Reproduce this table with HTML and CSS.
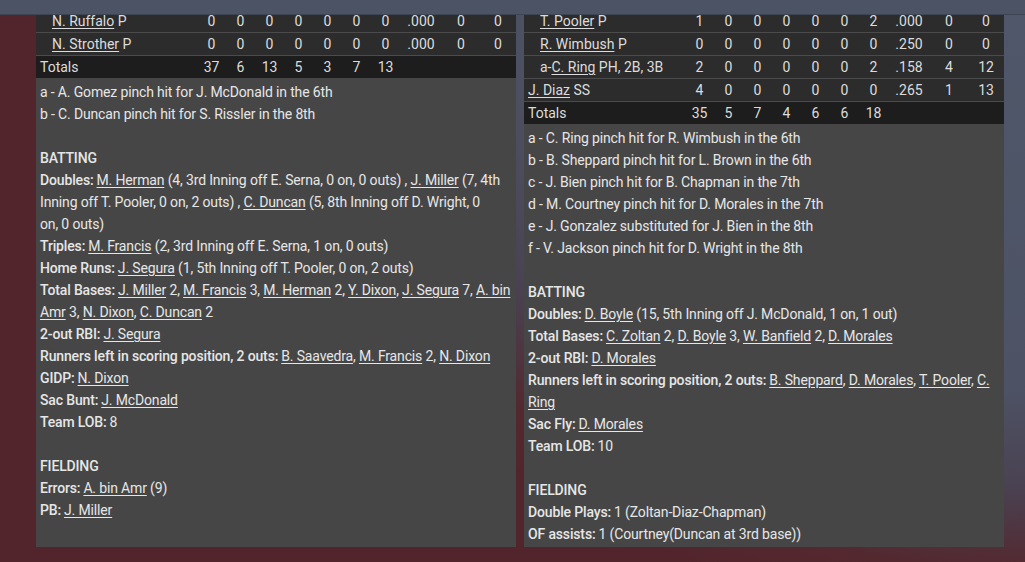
FILE: index.html
```html
<!DOCTYPE html>
<html lang="en">
<head>
<meta charset="utf-8">
<title>Box Score</title>
<link rel="stylesheet" href="styles.css">
</head>
<body>
<div class="topbar"></div>
<main class="panels">
  <section class="panel">
    <table class="box">
      <colgroup>
        <col class="c-name"><col class="c-n"><col class="c-n"><col class="c-n"><col class="c-n"><col class="c-n"><col class="c-n"><col class="c-n"><col class="c-avg"><col class="c-w1"><col class="c-w2">
      </colgroup>
      <tr><td class="name sub"><a>N. Ruffalo</a> P</td><td>0</td><td>0</td><td>0</td><td>0</td><td>0</td><td>0</td><td>0</td><td>.000</td><td>0</td><td>0</td></tr>
      <tr><td class="name sub"><a>N. Strother</a> P</td><td>0</td><td>0</td><td>0</td><td>0</td><td>0</td><td>0</td><td>0</td><td>.000</td><td>0</td><td>0</td></tr>
      <tr class="totals"><td class="name">Totals</td><td>37</td><td>6</td><td>13</td><td>5</td><td>3</td><td>7</td><td>13</td><td></td><td></td><td></td></tr>
    </table>
    <div class="notes">
      <p>a - A. Gomez pinch hit for J. McDonald in the 6th</p>
      <p>b - C. Duncan pinch hit for S. Rissler in the 8th</p>
      <p class="gap"></p>
      <p class="head">BATTING</p>
      <p><b>Doubles:</b><a>M. Herman</a> (4, 3rd Inning off E. Serna, 0 on, 0 outs) , <a>J. Miller</a> (7, 4th Inning off T. Pooler, 0 on, 2 outs) , <a>C. Duncan</a> (5, 8th Inning off D. Wright, 0 on,&nbsp;0 outs)</p>
      <p><b>Triples:</b><a>M. Francis</a> (2, 3rd Inning off E. Serna, 1 on, 0 outs)</p>
      <p><b>Home Runs:</b><a>J. Segura</a> (1, 5th Inning off T. Pooler, 0 on, 2 outs)</p>
      <p><b>Total Bases:</b><a>J. Miller</a> 2, <a>M. Francis</a> 3, <a>M. Herman</a> 2, <a>Y. Dixon</a>, <a>J. Segura</a> 7, <a>A. bin Amr</a> 3, <a>N. Dixon</a>, <a>C. Duncan</a> 2</p>
      <p><b>2-out RBI:</b><a>J. Segura</a></p>
      <p><b>Runners left in scoring position, 2 outs:</b><a>B. Saavedra</a>, <a>M. Francis</a> 2, <a>N. Dixon</a></p>
      <p><b>GIDP:</b><a>N. Dixon</a></p>
      <p><b>Sac Bunt:</b><a>J. McDonald</a></p>
      <p><b>Team LOB:</b>8</p>
      <p class="gap"></p>
      <p class="head">FIELDING</p>
      <p><b>Errors:</b><a>A. bin Amr</a> (9)</p>
      <p><b>PB:</b><a>J. Miller</a></p>
    </div>
  </section>
  <section class="panel">
    <table class="box">
      <colgroup>
        <col class="c-name"><col class="c-n"><col class="c-n"><col class="c-n"><col class="c-n"><col class="c-n"><col class="c-n"><col class="c-n"><col class="c-avg"><col class="c-w1"><col class="c-w2">
      </colgroup>
      <tr><td class="name sub"><a>T. Pooler</a> P</td><td>1</td><td>0</td><td>0</td><td>0</td><td>0</td><td>0</td><td>2</td><td>.000</td><td>0</td><td>0</td></tr>
      <tr><td class="name sub"><a>R. Wimbush</a> P</td><td>0</td><td>0</td><td>0</td><td>0</td><td>0</td><td>0</td><td>0</td><td>.250</td><td>0</td><td>0</td></tr>
      <tr><td class="name sub">a-<a>C. Ring</a> PH, 2B, 3B</td><td>2</td><td>0</td><td>0</td><td>0</td><td>0</td><td>0</td><td>2</td><td>.158</td><td>4</td><td>12</td></tr>
      <tr><td class="name"><a>J. Diaz</a> SS</td><td>4</td><td>0</td><td>0</td><td>0</td><td>0</td><td>0</td><td>0</td><td>.265</td><td>1</td><td>13</td></tr>
      <tr class="totals"><td class="name">Totals</td><td>35</td><td>5</td><td>7</td><td>4</td><td>6</td><td>6</td><td>18</td><td></td><td></td><td></td></tr>
    </table>
    <div class="notes">
      <p>a - C. Ring pinch hit for R. Wimbush in the 6th</p>
      <p>b - B. Sheppard pinch hit for L. Brown in the 6th</p>
      <p>c - J. Bien pinch hit for B. Chapman in the 7th</p>
      <p>d - M. Courtney pinch hit for D. Morales in the 7th</p>
      <p>e - J. Gonzalez substituted for J. Bien in the 8th</p>
      <p>f - V. Jackson pinch hit for D. Wright in the 8th</p>
      <p class="gap"></p>
      <p class="head">BATTING</p>
      <p><b>Doubles:</b><a>D. Boyle</a> (15, 5th Inning off J. McDonald, 1 on, 1 out)</p>
      <p><b>Total Bases:</b><a>C. Zoltan</a> 2, <a>D. Boyle</a> 3, <a>W. Banfield</a> 2, <a>D. Morales</a></p>
      <p><b>2-out RBI:</b><a>D. Morales</a></p>
      <p><b>Runners left in scoring position, 2 outs:</b><a>B. Sheppard</a>, <a>D. Morales</a>, <a>T. Pooler</a>, <a>C. Ring</a></p>
      <p><b>Sac Fly:</b><a>D. Morales</a></p>
      <p><b>Team LOB:</b>10</p>
      <p class="gap"></p>
      <p class="head">FIELDING</p>
      <p><b>Double Plays:</b>1 (Zoltan-Diaz-Chapman)</p>
      <p><b>OF assists:</b>1 (Courtney(Duncan at 3rd base))</p>
    </div>
  </section>
</main>
</body>
</html>
```
FILE: styles.css
```css
html, body {
  margin: 0;
  padding: 0;
  height: 100%;
}
body {
  font-family: Roboto, "Liberation Sans", sans-serif;
  font-size: 14px;
  color: #e6e6e6;
  background: radial-gradient(820px 640px at 100% 0%, #50576a 0%, #4d5365 60%, #4a4252 76%, #53282f 89%, #52242b 100%);
  background-color: #4f242b;
  overflow: hidden;
}
.topbar {
  position: fixed;
  top: 0;
  left: 0;
  right: 0;
  height: 14px;
  background: #4c5364;
  border-bottom: 1px solid #3f4452;
  z-index: 2;
}
.panels {
  display: flex;
  align-items: stretch;
  gap: 8px;
  padding: 10px 0 0 36px;
}
.panel {
  width: 480px;
  background: #464646;
  display: flex;
  flex-direction: column;
  padding-bottom: 2px;
}
.box {
  width: 480px;
  border-collapse: collapse;
  table-layout: fixed;
  color: #dcdcdc;
}
.c-name { width: 161px; }
.c-n { width: 29px; }
.c-avg { width: 42px; }
.c-w1 { width: 38px; }
.c-w2 { width: 36px; }
.box tr {
  background: #2c2c2c;
}
.box td {
  height: 22px;
  padding: 0;
  text-align: center;
  white-space: nowrap;
  border-bottom: 1px solid #4b4b4b;
  line-height: 22px;
}
.box td.name {
  text-align: left;
  padding-left: 4px;
}
.box td.name.sub {
  padding-left: 16px;
}
.box tr.totals {
  background: #1d1d1d;
}
.box tr.totals td {
  border-bottom: none;
}
a {
  color: inherit;
  text-decoration: underline;
  text-underline-offset: 2px;
}
.notes {
  padding: 3px 4px 0 4px;
  line-height: 22px;
  letter-spacing: -0.15px;
}
.notes p {
  margin: 0;
}
.notes p.gap {
  height: 22px;
}
.notes .head {
  font-weight: 500;
}
.notes b {
  font-weight: 500;
  margin-right: 3px;
}
```
